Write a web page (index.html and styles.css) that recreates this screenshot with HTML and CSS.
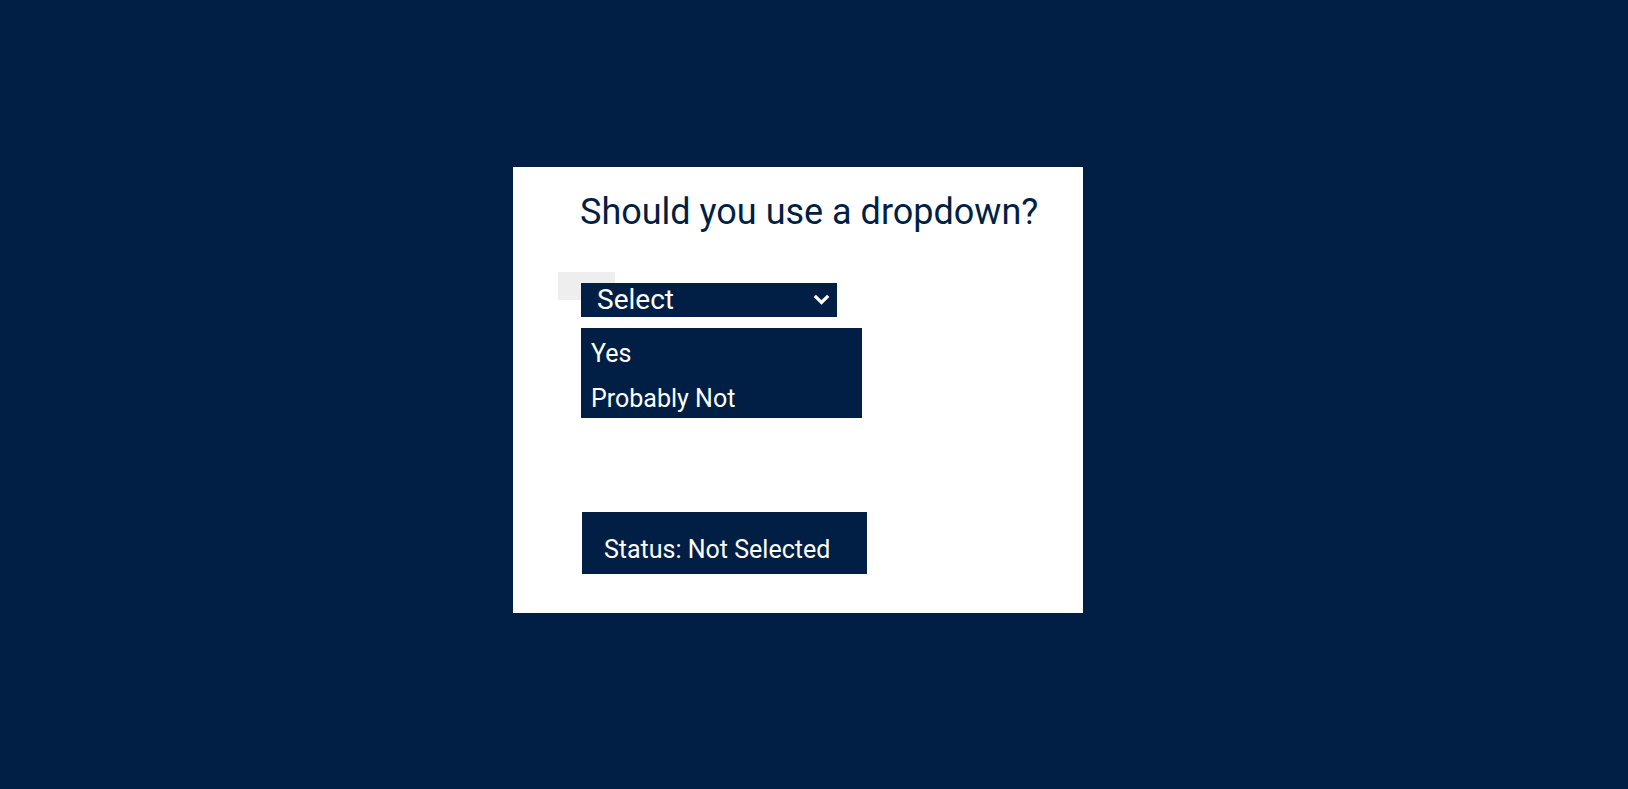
FILE: index.html
```html
<!DOCTYPE html>
<html lang="en">
<head>
<meta charset="utf-8">
<title>Dropdown</title>
<link rel="stylesheet" href="styles.css">
</head>
<body>
<div class="page">
  <div class="card">
    <h1 class="title">Should you use a dropdown?</h1>
    <div class="field">
      <span class="ghost"></span>
      <div class="select">
        <span class="select-label">Select</span>
        <svg class="chevron" width="17" height="11" viewBox="0 0 17 11"><path d="M1.8 1.8 L8.5 8.5 L15.2 1.8" fill="none" stroke="#fff" stroke-width="3.2"/></svg>
      </div>
    </div>
    <ul class="options">
      <li class="option">Yes</li>
      <li class="option">Probably Not</li>
    </ul>
    <div class="status">Status: Not Selected</div>
  </div>
</div>
</body>
</html>
```

FILE: styles.css
```css
html, body {
  margin: 0;
  padding: 0;
  background: #011f44;
  font-family: Roboto, "Liberation Sans", sans-serif;
}

.page {
  display: flex;
  align-items: flex-start;
  padding: 167px 0 0 513px;
  height: 789px;
  box-sizing: border-box;
}

.card {
  width: 570px;
  height: 446px;
  box-sizing: border-box;
  background: #ffffff;
  padding: 24px 0 0 68px;
  display: flex;
  flex-direction: column;
  align-items: flex-start;
}

.title {
  margin: 0 0 0 -1px;
  font-size: 36px;
  font-weight: 400;
  color: #011f44;
  line-height: 42px;
}

.field {
  position: relative;
  margin-top: 50px;
}

.ghost {
  position: absolute;
  left: -23px;
  top: -11px;
  width: 57px;
  height: 28px;
  background: #eeeeee;
}

.select {
  position: relative;
  width: 256px;
  height: 34px;
  box-sizing: border-box;
  background: #011f44;
  color: #fff;
  display: flex;
  align-items: center;
  justify-content: space-between;
  padding: 0 7px 0 16px;
}

.select-label {
  font-size: 28px;
  line-height: 34px;
}

.chevron {
  display: block;
  margin-top: -1px;
}

.options {
  list-style: none;
  margin: 11px 0 0 0;
  padding: 0;
  width: 281px;
  background: #011f44;
}

.option {
  height: 45px;
  box-sizing: border-box;
  padding: 12px 10px 0 10px;
  font-size: 25px;
  line-height: 28px;
  color: #fff;
}

.status {
  margin: 94px 0 0 1px;
  width: 285px;
  height: 62px;
  box-sizing: border-box;
  padding: 24px 0 0 22px;
  background: #011f44;
  color: #fff;
  font-size: 25px;
  line-height: 28px;
}
```
